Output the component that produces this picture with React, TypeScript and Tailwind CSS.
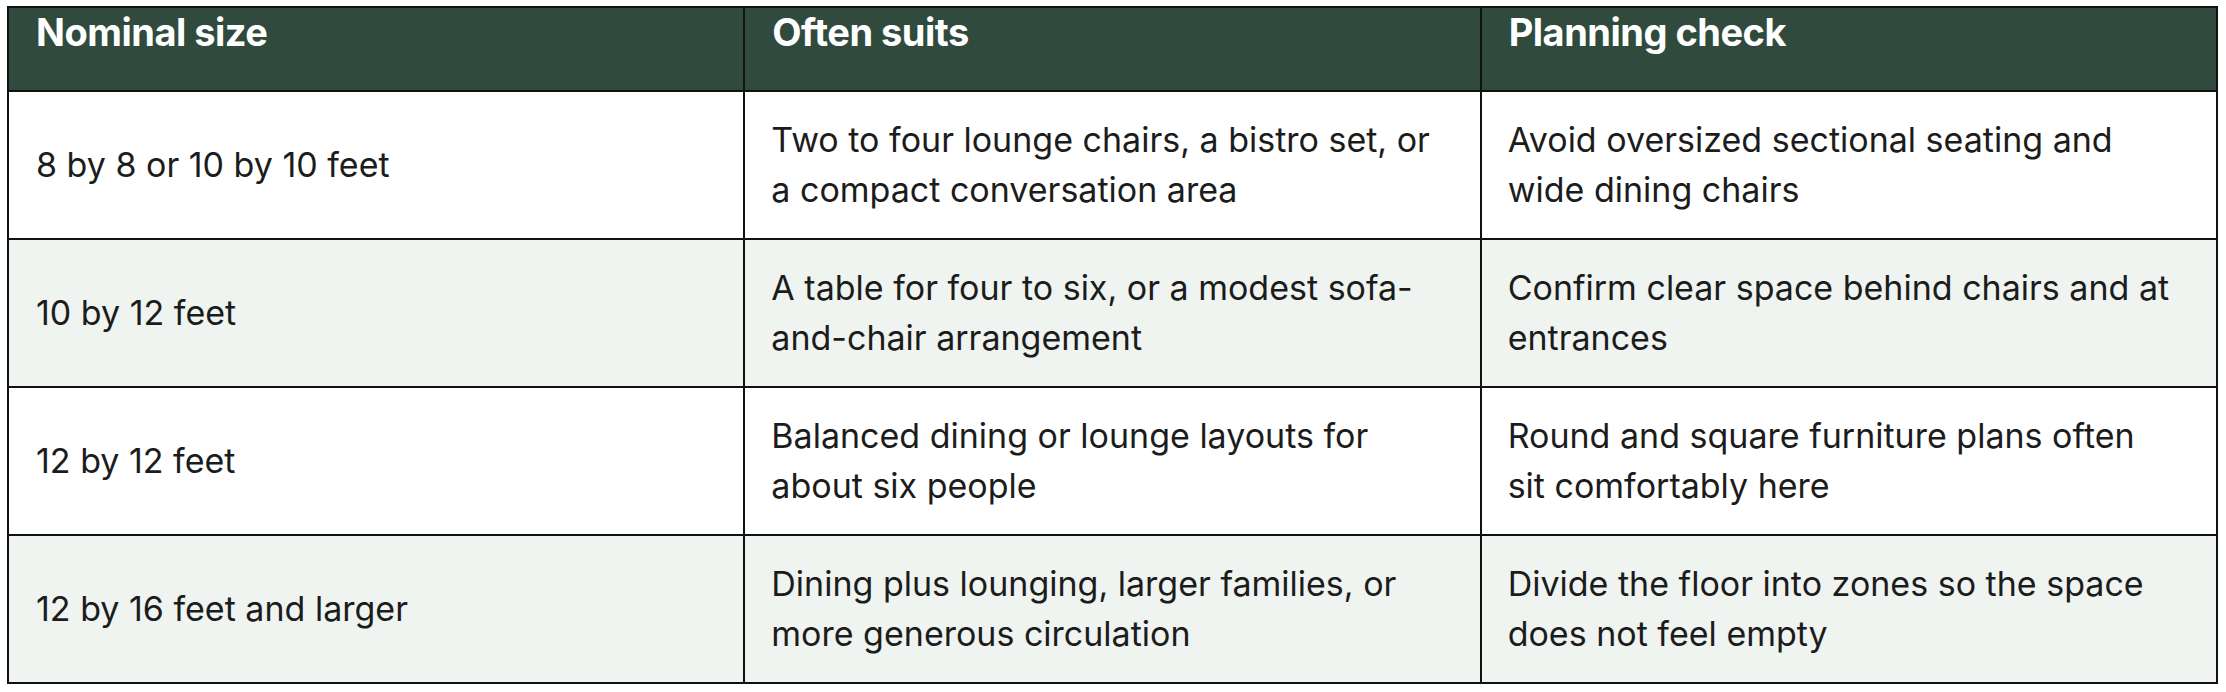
const rows: { size: string; suits: string[]; check: string[] }[] = [
  {
    size: '8 by 8 or 10 by 10 feet',
    suits: ['Two to four lounge chairs, a bistro set, or', 'a compact conversation area'],
    check: ['Avoid oversized sectional seating and', 'wide dining chairs'],
  },
  {
    size: '10 by 12 feet',
    suits: ['A table for four to six, or a modest sofa-', 'and-chair arrangement'],
    check: ['Confirm clear space behind chairs and at', 'entrances'],
  },
  {
    size: '12 by 12 feet',
    suits: ['Balanced dining or lounge layouts for', 'about six people'],
    check: ['Round and square furniture plans often', 'sit comfortably here'],
  },
  {
    size: '12 by 16 feet and larger',
    suits: ['Dining plus lounging, larger families, or', 'more generous circulation'],
    check: ['Divide the floor into zones so the space', 'does not feel empty'],
  },
];

const Lines = ({ lines }: { lines: string[] }) => (
  <>
    {lines.map((l) => (
      <span key={l} className="block whitespace-nowrap">
        {l}
      </span>
    ))}
  </>
);

export default function App() {
  return (
    <div className="w-[2226px] h-[692px] bg-white pl-[7px] pt-[6px] font-['Inter',sans-serif]">
      <table className="w-[2211px] table-fixed border-collapse border-2 border-[#111]">
        <thead>
          <tr className="h-[84px] bg-[#304b3d] text-white">
            {['Nominal size', 'Often suits', 'Planning check'].map((h) => (
              <th
                key={h}
                className="border-2 border-[#111] align-top text-left font-bold text-[38px] leading-[44px] tracking-[-0.5px] pl-[27px] pt-[2px]"
              >
                {h}
              </th>
            ))}
          </tr>
        </thead>
        <tbody className="text-[#1c1c1c] text-[34px] leading-[50px]">
          {rows.map((r, i) => (
            <tr key={r.size} className={`h-[148px] ${i % 2 === 1 ? 'bg-[#eff4f0]' : 'bg-white'}`}>
              <td className="border-2 border-[#111] align-middle pl-[27px]">{r.size}</td>
              <td className="border-2 border-[#111] align-middle pl-[26px]">
                <Lines lines={r.suits} />
              </td>
              <td className="border-2 border-[#111] align-middle pl-[26px]">
                <Lines lines={r.check} />
              </td>
            </tr>
          ))}
        </tbody>
      </table>
    </div>
  );
}
